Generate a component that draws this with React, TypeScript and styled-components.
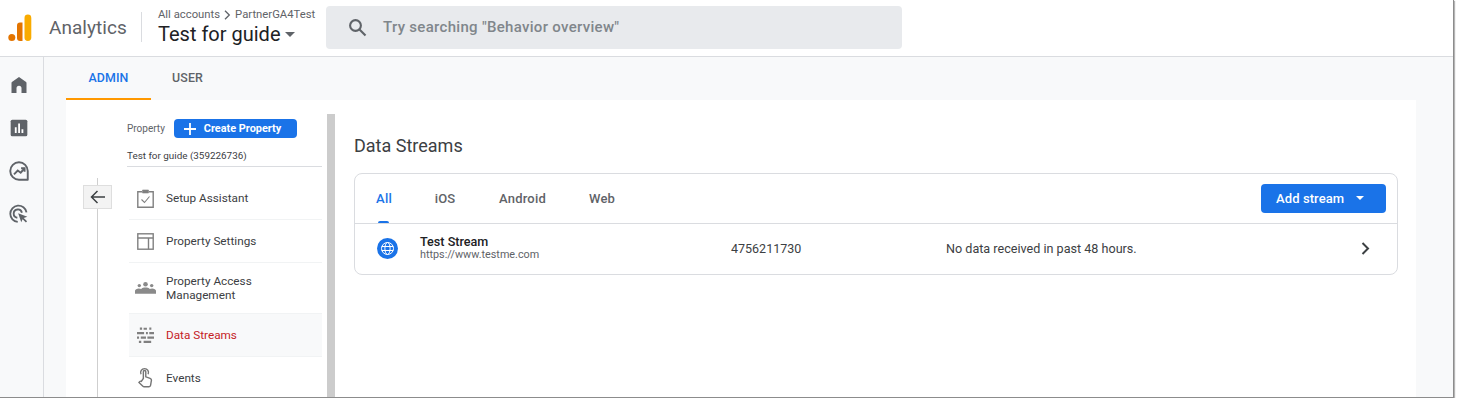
import React from "react";
import styled, { createGlobalStyle } from "styled-components";

const Global = createGlobalStyle`
  html, body { margin: 0; padding: 0; background: #fff; overflow: hidden; }
  body { font-family: Roboto, "Liberation Sans", sans-serif; color: #3c4043; }
`;

const Frame = styled.div`
  width: 1453px;
  height: 397px;
  overflow: hidden;
  display: flex;
  flex-direction: column;
  background: #f8f9fa;
  border-right: 1px solid #8c8c8c;
  border-bottom: 1px solid #8c8c8c;
  box-shadow: 1px 1px 1px #b5b5b5;
`;

const Header = styled.header`
  height: 56px;
  flex: none;
  background: #fff;
  border-bottom: 1px solid #dadce0;
  display: flex;
  align-items: center;
`;

const LogoBox = styled.div`
  width: 49px;
  flex: none;
  display: flex;
  padding-left: 8px;
  box-sizing: border-box;
`;

const Product = styled.div`
  width: 92px;
  flex: none;
  font-size: 19px;
  letter-spacing: 0.05px;
  color: #5f6368;
  margin-top: -2px;
`;

const Divider = styled.div`
  width: 1px;
  height: 30px;
  background: #dadce0;
  margin-top: -2px;
  flex: none;
`;

const Crumbs = styled.div`
  width: 184px;
  flex: none;
  padding-left: 16px;
  box-sizing: border-box;
  margin-top: -1px;
`;

const CrumbLine = styled.div`
  font-size: 11.3px;
  line-height: 14px;
  color: #5f6368;
  display: flex;
  align-items: center;
  gap: 4px;
`;

const AccountLine = styled.div`
  font-size: 20px;
  line-height: 25px;
  color: #202124;
  display: flex;
  align-items: center;
  gap: 4px;
`;

const Search = styled.div`
  width: 576px;
  height: 43px;
  flex: none;
  margin-top: -2px;
  border-radius: 4px;
  background: #e8eaed;
  display: flex;
  align-items: center;
  gap: 16px;
  padding-left: 22px;
  box-sizing: border-box;
  font-size: 15px;
  letter-spacing: 0.3px;
  font-weight: 500;
  color: #80868b;
`;

const Body = styled.div`
  flex: 1;
  display: flex;
  min-height: 0;
`;

const Rail = styled.nav`
  width: 38px;
  flex: none;
  border-right: 1px solid #dadce0;
  display: flex;
  flex-direction: column;
  align-items: center;
  gap: 23px;
  padding: 18px 5px 0 0;
`;

const Main = styled.main`
  flex: 1;
  padding: 0 37px 0 22px;
  display: flex;
  flex-direction: column;
  min-width: 0;
`;

const TopTabs = styled.div`
  height: 43px;
  flex: none;
  display: flex;
`;

const TopTab = styled.div<{ $active?: boolean; $w: number }>`
  width: ${(p) => p.$w}px;
  height: 43px;
  box-sizing: border-box;
  display: flex;
  align-items: center;
  justify-content: center;
  font-size: 12.4px;
  font-weight: 500;
  letter-spacing: 0.1px;
  padding-bottom: 1px;
  color: ${(p) => (p.$active ? "#1a73e8" : "#5f6368")};
  border-bottom: 2px solid ${(p) => (p.$active ? "#ff9800" : "transparent")};
`;

const Panel = styled.div`
  flex: 1;
  background: #fff;
  display: flex;
  min-height: 0;
`;

const SideWrap = styled.div`
  width: 261px;
  flex: none;
  display: flex;
  overflow: hidden;
`;

const Spine = styled.div`
  width: 61px;
  flex: none;
  display: flex;
  flex-direction: column;
  align-items: flex-start;
  padding: 78px 0 0 17px;
  box-sizing: border-box;
`;

const SpineLine = styled.div<{ $h: number }>`
  width: 1px;
  height: ${(p) => p.$h}px;
  margin-left: 14px;
  background: #cfcfcf;
  flex: ${(p) => (p.$h === 0 ? 1 : "none")};
`;

const BackButton = styled.div`
  width: 29px;
  height: 24px;
  flex: none;
  background: #f3f3f3;
  border: 1px solid #dedede;
  box-sizing: border-box;
  display: flex;
  align-items: center;
  justify-content: center;
`;

const SideCol = styled.div`
  flex: 1;
  min-width: 0;
  padding-top: 19px;
`;

const PropertyRow = styled.div`
  display: flex;
  align-items: center;
  gap: 9px;
  height: 19px;
  font-size: 10px;
  color: #5f6368;
`;

const CreateButton = styled.div`
  width: 123px;
  height: 19px;
  border-radius: 4px;
  background: #1a73e8;
  color: #fff;
  display: flex;
  align-items: center;
  gap: 8px;
  padding-left: 10px;
  box-sizing: border-box;
  font-size: 10.9px;
  font-weight: 700;
`;

const PropertyName = styled.div`
  margin-top: 3px;
  height: 26px;
  line-height: 29px;
  font-size: 9.9px;
  color: #3c4043;
  border-bottom: 1px solid #dadce0;
  width: 195px;
  box-sizing: border-box;
`;

const ItemList = styled.div`
  margin-top: 10px;
`;

const Item = styled.div<{ $h: number; $active?: boolean }>`
  height: ${(p) => p.$h}px;
  box-sizing: border-box;
  width: 193px;
  margin-left: 2px;
  display: flex;
  align-items: center;
  gap: 10px;
  padding-left: 5px;
  font-size: 11.75px;
  line-height: 14px;
  color: ${(p) => (p.$active ? "#c5221f" : "#3c4043")};
  background: ${(p) => (p.$active ? "#f8f9fa" : "transparent")};
  border-bottom: 1px solid #f1f3f4;
`;

const ItemIcon = styled.div`
  width: 22px;
  flex: none;
  display: flex;
  justify-content: center;
`;

const Scrollbar = styled.div`
  width: 8px;
  flex: none;
  margin-top: 14px;
  background: #cccccc;
`;

const Content = styled.section`
  flex: 1;
  min-width: 0;
  padding: 36px 18px 0 19px;
`;

const Title = styled.h1`
  margin: 0;
  font-size: 18px;
  line-height: 20px;
  font-weight: 400;
  color: #3c4043;
`;

const Card = styled.div`
  margin-top: 17px;
  height: 102px;
  box-sizing: border-box;
  border: 1px solid #dadce0;
  border-radius: 8px;
`;

const CardTabs = styled.div`
  height: 49px;
  border-bottom: 1px solid #dadce0;
  display: flex;
  align-items: center;
  padding-right: 11px;
`;

const CardTab = styled.div<{ $active?: boolean; $w: number }>`
  position: relative;
  width: ${(p) => p.$w}px;
  height: 48px;
  display: flex;
  align-items: center;
  justify-content: center;
  font-size: 13px;
  letter-spacing: 0.2px;
  font-weight: 500;
  padding-bottom: 1px;
  box-sizing: border-box;
  color: ${(p) => (p.$active ? "#1a73e8" : "#5f6368")};
  ${(p) =>
    p.$active
      ? `&::after { content: ""; position: absolute; left: 23px; bottom: 0; width: 11px; height: 2px; border-radius: 2px 2px 0 0; background: #1a73e8; }`
      : ""}
`;

const AddButton = styled.div`
  margin-left: auto;
  width: 125px;
  height: 29px;
  border-radius: 4px;
  background: #1a73e8;
  color: #fff;
  display: flex;
  align-items: center;
  gap: 12px;
  padding: 0 0 1px 15px;
  box-sizing: border-box;
  font-size: 13px;
  letter-spacing: 0.1px;
  font-weight: 500;
`;

const StreamRow = styled.div`
  height: 50px;
  padding: 0 0 1px 22px;
  box-sizing: border-box;
  display: flex;
  align-items: center;
`;

const StreamName = styled.div`
  width: 311px;
  margin-left: 22px;
`;

const StreamTitle = styled.div`
  font-size: 12.6px;
  line-height: 13px;
  font-weight: 500;
  color: #202124;
`;

const StreamUrl = styled.div`
  font-size: 10.8px;
  line-height: 14px;
  color: #5f6368;
`;

const StreamId = styled.div`
  width: 215px;
  font-size: 12.5px;
  color: #3c4043;
`;

const StreamStatus = styled.div`
  flex: 1;
  font-size: 12.6px;
  color: #3c4043;
`;

const Chevron = styled.div`
  width: 36px;
  display: flex;
`;

const Home = () => (
  <svg width="20" height="20" viewBox="0 0 24 24" fill="#5f6368"><path d="M12 2.500 3.500 8.500c-.4.300-.5.600-.5 1V21.500h6V16a3 3 0 0 1 6 0v5.500h6V9.500c0-.4-.1-.7-.5-1z" /></svg>
);
const Reports = () => (
  <svg width="20" height="20" viewBox="0 0 24 24"><rect x="2" y="2" width="20" height="20" rx="2" fill="#5f6368" /><path d="M7 11h2.200v7H7zM11 6.500h2.200V18H11zM15 13.500h2.200V18H15z" fill="#fff" /></svg>
);
const Explore = () => (
  <svg width="20" height="20" viewBox="0 0 24 24" fill="none" stroke="#5f6368" strokeWidth="2.300"><path d="M12 22.500A10.500 10.500 0 1 1 22.500 12v10.500z" strokeLinejoin="round" /><path d="M6 16l4.500-4.500 3.500 2.500 4.500-5" /><path d="M14.500 8.700h4.200v4.200" /></svg>
);
const Advertising = () => (
  <svg width="20" height="20" viewBox="0 0 24 24" fill="none" stroke="#5f6368" strokeWidth="2.200"><path d="M21 10a9.800 9.800 0 1 0-10.500 11.500" /><path d="M15.500 10.500a5 5 0 1 0-5.500 6" /><path d="M11 11l11 4.200-4.300 1.600 4 4-1.400 1.400-4-4L14.700 22z" fill="#5f6368" stroke="none" /></svg>
);
const Checklist = () => (
  <svg width="17" height="19" viewBox="0 0 17 19" fill="none" stroke="#808080" strokeWidth="1.400"><path d="M5 2.700H.8v15.500h15.400V2.700H12" /><path d="M5.500 1h6v3h-6z" fill="#808080" strokeWidth="0.6" /><path d="M4.500 10.500l3 3 5-6" strokeWidth="1.100" /></svg>
);
const Layout = () => (
  <svg width="17" height="17" viewBox="0 0 17 17" fill="none" stroke="#808080" strokeWidth="1.400"><rect x=".8" y=".8" width="15.400" height="15.400" /><path d="M.8 5h15.400M11.500 5v11.200" /></svg>
);
const People = () => (
  <svg width="21" height="14" viewBox="0 0 22 14" fill="#8a8a8a"><circle cx="11" cy="3" r="2.400" /><circle cx="4.500" cy="4.500" r="1.800" /><circle cx="17.500" cy="4.500" r="1.800" /><path d="M0 13v-3c0-1.600 2-2.600 4-2.600 1 0 1.800.2 2.500.6.900-.9 2.700-1.400 4.500-1.400s3.600.5 4.500 1.400c.7-.4 1.500-.6 2.500-.6 2 0 4 1 4 2.600v3z" /></svg>
);
const Streams = () => (
  <svg width="17" height="17" viewBox="0 0 18 17" fill="#808080"><path d="M3 0h2.400v2.400H3zM7 .2h3.500v2.200H7zM13 0h2.200v2.400H13zM0 4.800h7.500v2.400H0zM9.500 4.800h2v2.400h-2zM13 4.800h5v2.400h-5zM0 9.500h2.200v2.400H0zM4 9.500h5.500v2.400H4zM11 9.500h7v2.400h-7zM2 14h2.500v2.400H2zM7 14h8v2.400H7z" /></svg>
);
const Touch = () => (
  <svg width="15" height="21" viewBox="0 0 16 22" fill="none" stroke="#757575" strokeWidth="1.500"><path d="M3.200 7.500a4.200 4.200 0 1 1 7.600 0" /><path d="M5.700 12V4.800a1.300 1.300 0 0 1 2.600 0v5.500l4.600 1.600c1 .4 1.600 1.200 1.400 2.200l-.9 5.400c-.1.700-.8 1.300-1.600 1.300H6.500c-.5 0-1-.2-1.300-.6L1 16.300l1-1c.5-.5 1.100-.5 1.600-.2z" /></svg>
);
const GlobeBadge = () => (
  <svg width="21" height="21" viewBox="0 0 21 21"><circle cx="10.500" cy="10.500" r="10.500" fill="#1a73e8" /><g fill="none" stroke="#fff" strokeWidth="1"><circle cx="10.500" cy="10.500" r="6" /><ellipse cx="10.500" cy="10.500" rx="2.600" ry="6" /><path d="M4.800 8.500h11.400M4.800 12.500h11.400" /></g></svg>
);

const items = [
  { label: "Setup Assistant", h: 43, icon: <Checklist /> },
  { label: "Property Settings", h: 43, icon: <Layout /> },
  { label: <>Property Access<br />Management</>, h: 51, icon: <People /> },
  { label: "Data Streams", h: 43, icon: <Streams />, active: true },
  { label: "Events", h: 42, icon: <Touch /> },
];

export default function App() {
  return (
    <>
      <Global />
      <Frame>
        <Header>
          <LogoBox>
            <svg width="24" height="28" viewBox="0 0 24 28">
              <rect x="16.500" y="0.500" width="6.800" height="26.500" rx="3.400" fill="#f9ab00" />
              <path d="M9 11.500a3 3 0 0 1 3-3h2.500V27H12a3 3 0 0 1-3-3z" fill="#e37400" />
              <circle cx="3.800" cy="23.400" r="3.500" fill="#e37400" />
            </svg>
          </LogoBox>
          <Product>Analytics</Product>
          <Divider />
          <Crumbs>
            <CrumbLine>
              All accounts
              <svg width="7" height="10" viewBox="0 0 7 10" fill="none" stroke="#5f6368" strokeWidth="1.300"><path d="M1 .8 5.300 5 1 9.200" /></svg>
              PartnerGA4Test
            </CrumbLine>
            <AccountLine>
              Test for guide
              <svg width="10" height="5" viewBox="0 0 10 5" fill="#5f6368"><path d="M0 0h10L5 5z" /></svg>
            </AccountLine>
          </Crumbs>
          <Search>
            <svg width="19" height="19" viewBox="0 0 19 19" fill="none" stroke="#5f6368" strokeWidth="2.100"><circle cx="7.500" cy="7.500" r="5.400" /><path d="M11.500 11.500 17.500 17.500" /></svg>
            Try searching "Behavior overview"
          </Search>
        </Header>
        <Body>
          <Rail>
            <Home />
            <Reports />
            <Explore />
            <Advertising />
          </Rail>
          <Main>
            <TopTabs>
              <TopTab $active $w={85}>ADMIN</TopTab>
              <TopTab $w={73}>USER</TopTab>
            </TopTabs>
            <Panel>
              <SideWrap>
                <Spine>
                  <SpineLine $h={7} />
                  <BackButton>
                    <svg width="16" height="14" viewBox="0 0 16 14" fill="none" stroke="#3c4043" strokeWidth="1.500"><path d="M15 7H1.500M7.500 1 1.500 7l6 6" /></svg>
                  </BackButton>
                  <SpineLine $h={0} />
                </Spine>
                <SideCol>
                  <PropertyRow>
                    Property
                    <CreateButton>
                      <svg width="12" height="12" viewBox="0 0 12 12" fill="none" stroke="#fff" strokeWidth="1.800"><path d="M6 0v12M0 6h12" /></svg>
                      Create Property
                    </CreateButton>
                  </PropertyRow>
                  <PropertyName>Test for guide (359226736)</PropertyName>
                  <ItemList>
                    {items.map((it, i) => (
                      <Item key={i} $h={it.h} $active={it.active}>
                        <ItemIcon>{it.icon}</ItemIcon>
                        <span>{it.label}</span>
                      </Item>
                    ))}
                  </ItemList>
                </SideCol>
              </SideWrap>
              <Scrollbar />
              <Content>
                <Title>Data Streams</Title>
                <Card>
                  <CardTabs>
                    <CardTab $active $w={58}>All</CardTab>
                    <CardTab $w={64}>iOS</CardTab>
                    <CardTab $w={91}>Android</CardTab>
                    <CardTab $w={68}>Web</CardTab>
                    <AddButton>
                      Add stream
                      <svg width="8" height="4" viewBox="0 0 8 4" fill="#fff"><path d="M0 0h8L4 4z" /></svg>
                    </AddButton>
                  </CardTabs>
                  <StreamRow>
                    <GlobeBadge />
                    <StreamName>
                      <StreamTitle>Test Stream</StreamTitle>
                      <StreamUrl>https://www.testme.com</StreamUrl>
                    </StreamName>
                    <StreamId>4756211730</StreamId>
                    <StreamStatus>No data received in past 48 hours.</StreamStatus>
                    <Chevron>
                      <svg width="9" height="13" viewBox="0 0 9 13" fill="none" stroke="#3c4043" strokeWidth="2"><path d="M1.500 1 7 6.500 1.500 12" /></svg>
                    </Chevron>
                  </StreamRow>
                </Card>
              </Content>
            </Panel>
          </Main>
        </Body>
      </Frame>
    </>
  );
}
